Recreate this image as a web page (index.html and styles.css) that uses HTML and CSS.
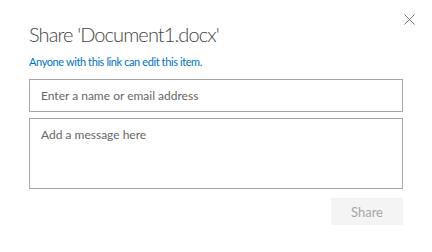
FILE: index.html
```html
<!DOCTYPE html>
<html lang="en">
<head>
  <meta charset="UTF-8" />
  <title>Share</title>
  <link rel="stylesheet" href="styles.css">
</head>
<body>
  <div class="dialog">
    <button class="close-btn" aria-label="Close">
      <svg width="11" height="11" viewBox="0 0 11 11">
        <path d="M0.5 0.5 L10.5 10.5 M10.5 0.5 L0.5 10.5" stroke="#777" stroke-width="1" fill="none"/>
      </svg>
    </button>

    <h1 class="title">Share 'Document1.docx'</h1>
    <a href="#" class="link-info">Anyone with this link can edit this item.</a>

    <form class="share-form">
      <input type="text" class="field" placeholder="Enter a name or email address">
      <textarea class="field message" placeholder="Add a message here"></textarea>
      <div class="actions">
        <button type="button" class="share-btn" disabled>Share</button>
      </div>
    </form>
  </div>
</body>
</html>
```

FILE: styles.css
```css
body {
  margin: 0;
  background: #fff;
  font-family: 'Lato', 'Open Sans', sans-serif;
}

.dialog {
  position: relative;
  padding: 20px 29px 0 29px;
}

.close-btn {
  position: absolute;
  top: 14px;
  right: 17px;
  padding: 0;
  border: none;
  background: none;
  line-height: 0;
  cursor: pointer;
}

.title {
  margin: 0;
  font-size: 20px;
  font-weight: 300;
  letter-spacing: -0.9px;
  line-height: 28px;
  color: #444;
}

.link-info {
  display: block;
  margin-top: 6px;
  font-size: 11px;
  letter-spacing: -0.4px;
  line-height: 16px;
  color: #0072c6;
  text-decoration: none;
}

.share-form {
  display: flex;
  flex-direction: column;
  gap: 6px;
  margin-top: 9px;
}

.field {
  box-sizing: border-box;
  width: 100%;
  margin: 0;
  border: 1px solid #a6a6a6;
  padding: 0 11px;
  font-family: inherit;
  font-size: 12px;
  color: #333;
  outline: none;
}

input.field {
  height: 33px;
}

.message {
  height: 71px;
  padding-top: 8px;
  resize: none;
}

.field::placeholder {
  color: #666;
}

.actions {
  display: flex;
  justify-content: flex-end;
  margin-top: 3px;
}

.share-btn {
  width: 72px;
  height: 27px;
  border: none;
  background: #f4f4f4;
  color: #a6a6a6;
  font-family: inherit;
  font-size: 13px;
}
```
